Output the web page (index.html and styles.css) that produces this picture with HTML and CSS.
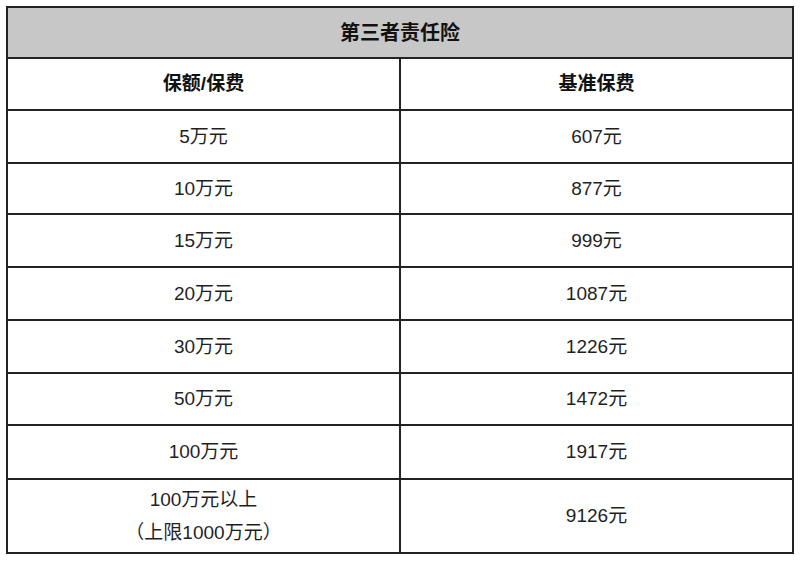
FILE: index.html
```html
<!DOCTYPE html>
<html lang="zh-CN">
<head>
<meta charset="utf-8">
<title>第三者责任险</title>
<link rel="stylesheet" href="styles.css">
</head>
<body>
<table class="rates">
  <tr class="r-title"><th colspan="2" class="title">第三者责任险</th></tr>
  <tr class="r-head"><th>保额/保费</th><th>基准保费</th></tr>
  <tr class="r1"><td>5万元</td><td>607元</td></tr>
  <tr class="r2"><td>10万元</td><td>877元</td></tr>
  <tr class="r3"><td>15万元</td><td>999元</td></tr>
  <tr class="r4"><td>20万元</td><td>1087元</td></tr>
  <tr class="r5"><td>30万元</td><td>1226元</td></tr>
  <tr class="r6"><td>50万元</td><td>1472元</td></tr>
  <tr class="r7"><td>100万元</td><td>1917元</td></tr>
  <tr class="r-last"><td class="two">100万元以上<br>（上限1000万元）</td><td>9126元</td></tr>
</table>
</body>
</html>
```
FILE: styles.css
```css
html, body {
  margin: 0;
  padding: 0;
  background: #ffffff;
}
body {
  padding: 6px 0 0 6px;
  font-family: "Liberation Sans", "Noto Sans CJK SC", sans-serif;
  color: #1f1f1f;
}
.rates {
  border-collapse: collapse;
  width: 788px;
  table-layout: fixed;
}
.rates th, .rates td {
  border: 2px solid #222222;
  text-align: center;
  vertical-align: middle;
  padding: 0;
  font-size: 19px;
  line-height: 24px;
}
.rates th {
  font-weight: bold;
  color: #111111;
}
.rates .title {
  background: #c7c7c7;
  font-size: 20px;
}
.r-title { height: 51px; }
.r-head { height: 52px; }
.r1 { height: 53px; }
.r2 { height: 51px; }
.r3 { height: 53px; }
.r4 { height: 53px; }
.r5 { height: 53px; }
.r6 { height: 52px; }
.r7 { height: 54px; }
.r-last { height: 74px; }
.rates .two {
  line-height: 33px;
}
```
